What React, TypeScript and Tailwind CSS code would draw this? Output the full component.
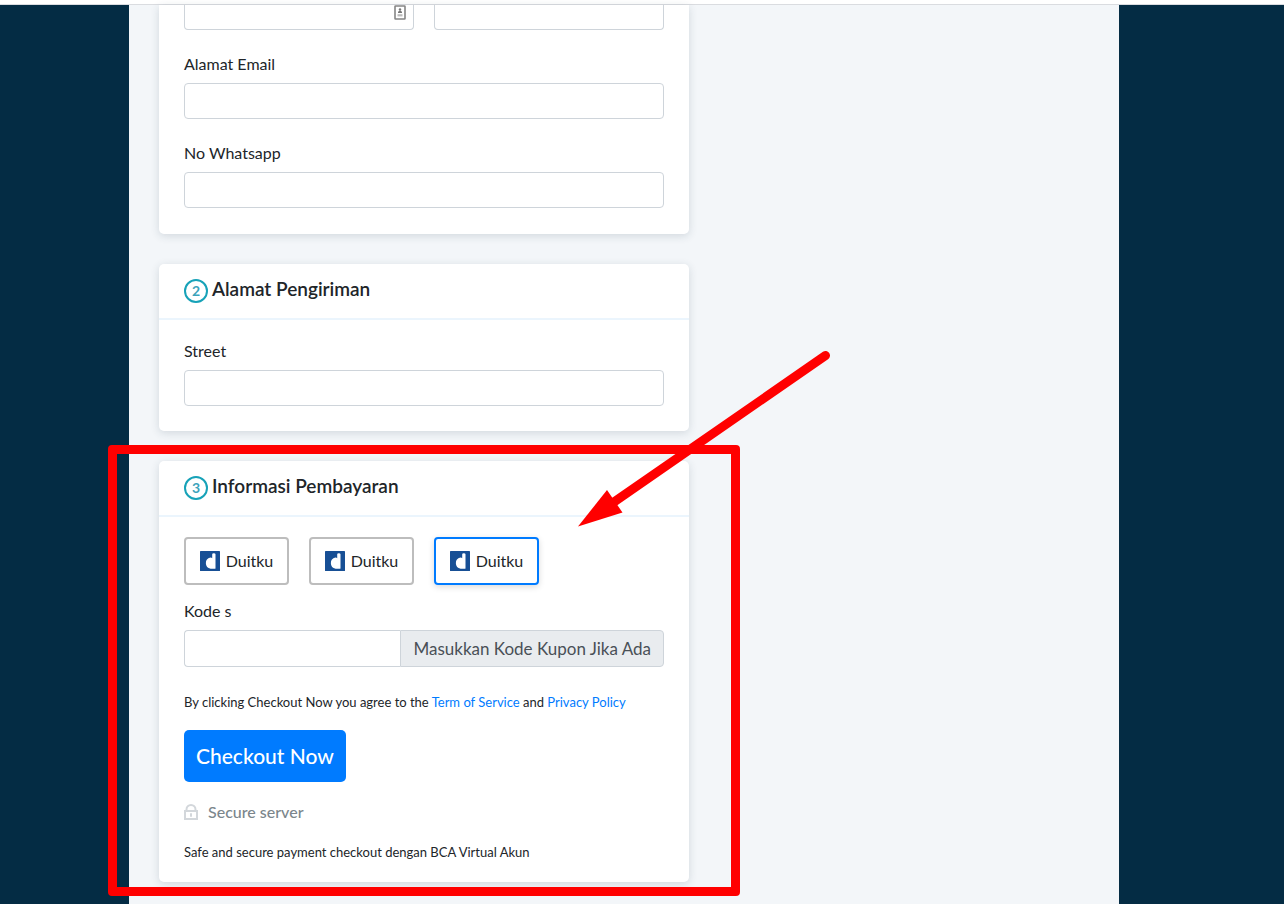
import type { InputHTMLAttributes, ReactNode } from "react";
import { useState } from "react";

const inputBox = "block w-full min-w-0 border border-[#ced4da] bg-white px-3 text-base outline-none focus:border-[#80bdff]";

function Field({ id, label, ...rest }: { id: string; label: string } & InputHTMLAttributes<HTMLInputElement>) {
  return (
    <div className="flex flex-col gap-2">
      <label htmlFor={id} className="text-[16px] leading-[23px]">
        {label}
      </label>
      <input id={id} className={`${inputBox} h-9 rounded`} {...rest} />
    </div>
  );
}

function StepCard({ step, title, children }: { step: number; title: string; children: ReactNode }) {
  return (
    <section className="relative rounded-[5px] bg-white shadow-[0_2px_8px_rgba(40,60,80,0.16)]">
      <header className="flex h-14 items-center gap-1 border-b-2 border-[#ebf5fd] px-[25px]">
        <span className="flex size-6 items-center justify-center rounded-full border-2 border-[#17a2b8] text-[14px] font-bold leading-none text-[#3ba3bb]">
          {step}
        </span>
        <h2 className="pb-1 text-[19px] font-semibold leading-6">{title}</h2>
      </header>
      {children}
    </section>
  );
}

function AutofillIcon() {
  return (
    <svg viewBox="0 0 12 15" className="absolute right-2 top-0 h-[15px] w-3" aria-hidden="true">
      <rect x="1" y="1" width="10" height="13" rx="0.5" fill="#fff" stroke="#858585" strokeWidth="1.6" />
      <circle cx="6" cy="4.5" r="1.2" fill="#777" />
      <path d="M4 8V6.8L6 5.4l2 1.4V8z" fill="#777" />
      <path d="M3.5 9.2h5v2.2h-5z" fill="#bbb" />
    </svg>
  );
}

function DuitkuLogo() {
  return (
    <svg viewBox="0 0 20 20" className="size-5 shrink-0" aria-hidden="true">
      <rect width="20" height="20" rx="0.6" fill="#174f95" />
      <path
        d="M12.2 3.2Q12.2 2.2 13.8 2.2Q15.5 2.2 15.5 3.2V17.2Q15.5 17.8 14.8 17.8H10.6A5.7 5.7 0 0 1 10.4 6.6Q11.8 6.6 12.2 7.2Z"
        fill="#fff"
      />
    </svg>
  );
}

function LockIcon() {
  return (
    <svg viewBox="0 0 14 16" className="h-4 w-3.5" fill="none" stroke="#d3d7db" strokeWidth="2" aria-hidden="true">
      <path d="M1 7h12v8H1z" />
      <path d="M2.5 7V5.5a4.5 4.5 0 0 1 9 0V7" />
      <path d="M7 9.2v3.6" />
    </svg>
  );
}

function Annotation() {
  return (
    <>
      <div className="pointer-events-none absolute -bottom-3.5 -left-[51px] -right-[51px] -top-4 rounded-[4px] border-[9px] border-[#ff0000]" />
      <svg viewBox="578 350 254 178" className="pointer-events-none absolute left-[419px] -top-[111px] h-[178px] w-[254px]" aria-hidden="true">
        <path d="M825.5 355.5 614 502" stroke="#f00" strokeWidth="9" strokeLinecap="round" />
        <path d="M578 526.5 607 490l15.5 22.5z" fill="#f00" />
      </svg>
    </>
  );
}

export default function App() {
  const [method, setMethod] = useState(2);

  return (
    <div className="min-h-screen bg-[#042c44] font-['Lato',sans-serif] text-[#212529]">
      <div className="h-[5px] border-b border-[#dadce0] bg-white" />
      <div className="pr-9">
        <main className="mx-auto min-h-[calc(100vh-5px)] w-full max-w-[990px] bg-[#f3f6f9] px-[30px] pb-[22px]">
          <form className="flex max-w-[530px] flex-col gap-[30px]" onSubmit={(e) => e.preventDefault()}>
            <section className="flex flex-col gap-[22px] rounded-b-[5px] bg-white px-[25px] pb-[26px] shadow-[0_2px_8px_rgba(40,60,80,0.16)]">
              <div className="grid grid-cols-2 gap-5">
                <div className="relative">
                  <input aria-label="Nama Depan" className={`${inputBox} h-[25px] rounded-b border-t-0`} />
                  <AutofillIcon />
                </div>
                <input aria-label="Nama Belakang" className={`${inputBox} h-[25px] rounded-b border-t-0`} />
              </div>
              <Field id="email" label="Alamat Email" type="email" />
              <Field id="whatsapp" label="No Whatsapp" type="tel" />
            </section>

            <StepCard step={2} title="Alamat Pengiriman">
              <div className="px-[25px] pb-[25px] pt-[19px]">
                <Field id="street" label="Street" />
              </div>
            </StepCard>

            <StepCard step={3} title="Informasi Pembayaran">
              <div className="flex flex-col px-[25px] pb-5 pt-5">
                <div className="flex gap-5" role="radiogroup" aria-label="Metode pembayaran">
                  {[0, 1, 2].map((i) => (
                    <label
                      key={i}
                      className={`relative flex h-12 w-[105px] cursor-pointer items-center justify-center gap-1.5 rounded border-2 text-base ${
                        method === i ? "border-[#007bff] shadow-[0_2px_6px_rgba(0,0,0,0.15)]" : "border-[#bdbdbd]"
                      }`}
                    >
                      <input type="radio" name="method" className="sr-only" checked={method === i} onChange={() => setMethod(i)} />
                      <DuitkuLogo />
                      Duitku
                    </label>
                  ))}
                </div>

                <label htmlFor="coupon" className="mb-2 mt-3.5 text-[16px] leading-[23px]">
                  Kode s
                </label>
                <div className="flex h-[37px]">
                  <input id="coupon" className={`${inputBox} flex-1 rounded-l border-r-0`} />
                  <span className="flex items-center whitespace-nowrap rounded-r border border-[#ced4da] bg-[#e9ecef] px-3 text-[17px] leading-6 text-[#495057]">
                    Masukkan Kode Kupon Jika Ada
                  </span>
                </div>

                <p className="mb-[18px] mt-[25px] text-[13px] leading-5">
                  By clicking Checkout Now you agree to the{" "}
                  <a href="#terms" className="text-[#007bff]">
                    Term of Service
                  </a>{" "}
                  and{" "}
                  <a href="#privacy" className="text-[#007bff]">
                    Privacy Policy
                  </a>
                </p>
                <button type="submit" className="h-[52px] self-start rounded-[5px] bg-[#007bff] px-3 text-[21px] font-medium text-white">
                  Checkout Now
                </button>
                <div className="mt-5 flex h-5 items-center gap-2.5 text-[16px] font-medium text-[#7b868c]">
                  <LockIcon />
                  Secure server
                </div>
                <p className="mt-5 text-[13px] leading-5">Safe and secure payment checkout dengan BCA Virtual Akun</p>
              </div>
              <Annotation />
            </StepCard>
          </form>
        </main>
      </div>
    </div>
  );
}
